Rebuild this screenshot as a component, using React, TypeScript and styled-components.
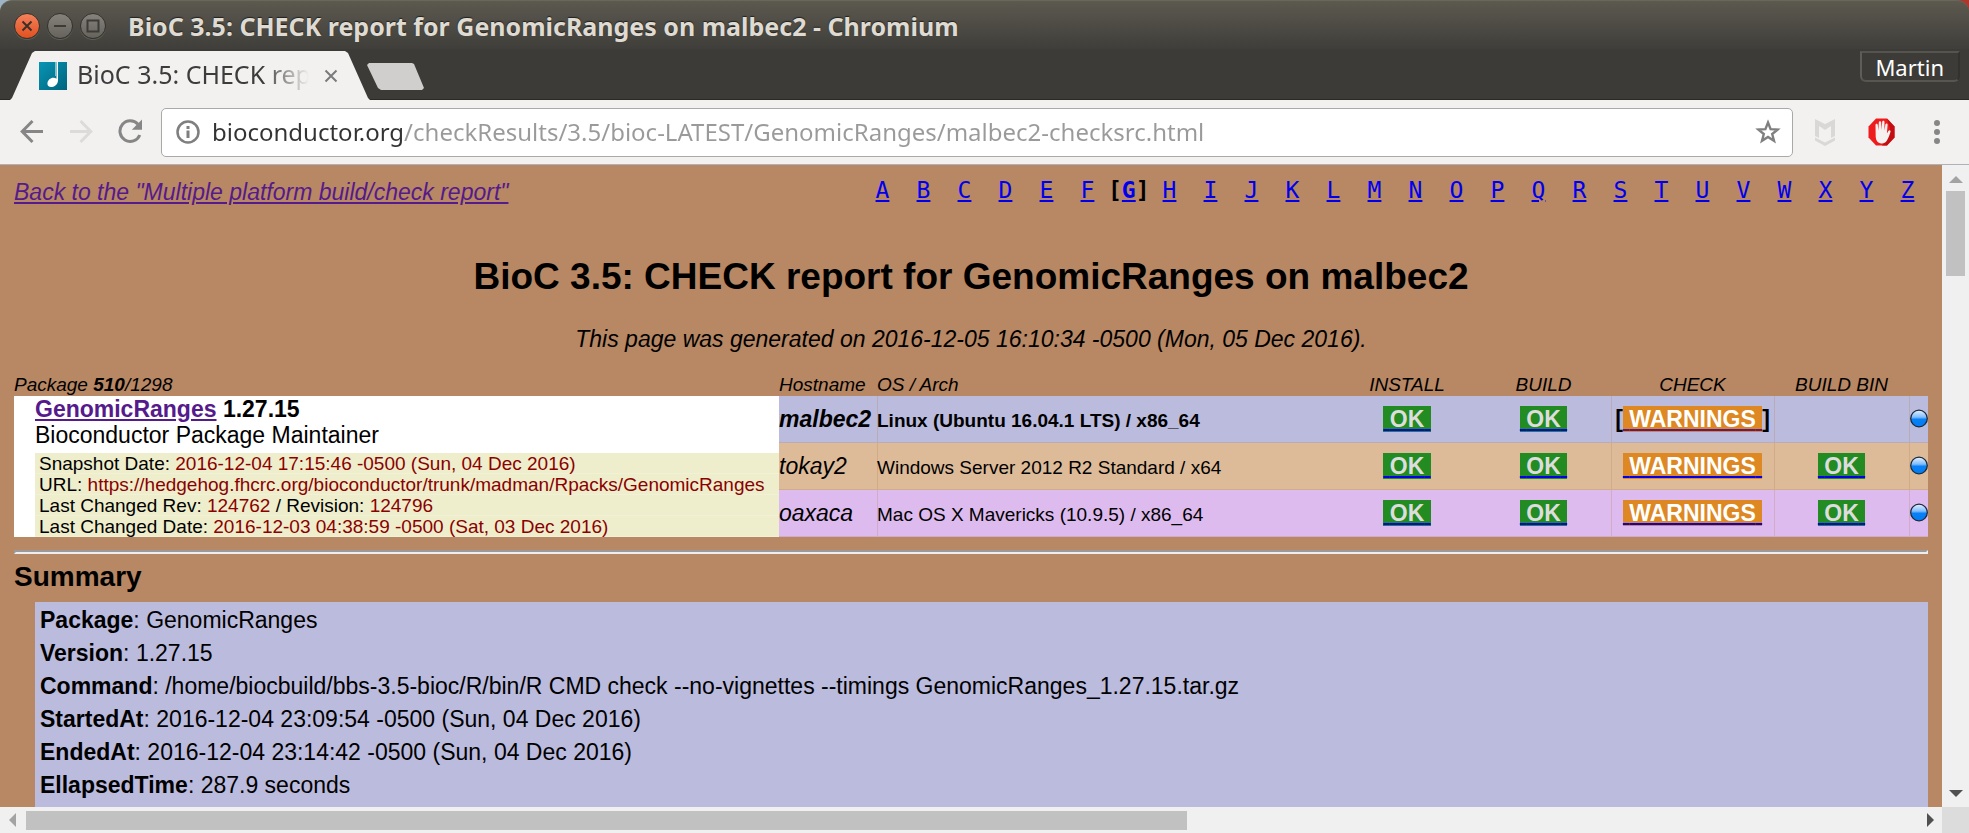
import React from 'react';
import styled, { createGlobalStyle, css } from 'styled-components';

const chromeFont = '"Noto Sans", "Open Sans", sans-serif';
const pageFont = '"Liberation Sans", Arial, sans-serif';
const monoFont = '"DejaVu Sans Mono", monospace';

const linkBlue = '#0000ee';
const linkVisited = '#551a8b';

const GlobalStyle = createGlobalStyle`
  * { box-sizing: border-box; }
  body { margin: 0; background: #3c3b37; }
  button { border: 0; padding: 0; background: none; font: inherit; color: inherit; }
`;

const Window = styled.div`
  display: flex;
  flex-direction: column;
  height: 100vh;
  overflow: hidden;
  background: linear-gradient(to right, #9fb4c4 50%, #b0352a 50%);
`;

/* ---------- title bar ---------- */

const TitleBar = styled.header`
  display: flex;
  align-items: center;
  gap: 7px;
  height: 49px;
  flex: none;
  padding: 1px 14px 0;
  border-top: 1px solid #69665b;
  border-radius: 12px 12px 0 0;
  background: linear-gradient(#5c594f, #3f3e3a);
  box-shadow: 0 12px 0 #3c3b37;
`;

const WindowButton = styled.button<{ $close?: boolean }>`
  width: 26px;
  height: 26px;
  border-radius: 50%;
  border: 1px solid #33322e;
  background: ${(p) =>
    p.$close ? 'linear-gradient(#f3815c, #e2501f)' : 'linear-gradient(#85827b, #65635c)'};
  box-shadow: 0 1px 0 #605e56;

  svg {
    display: block;
  }
`;

const WindowTitle = styled.h1`
  margin: 0 0 0 15px;
  color: #dfdbd2;
  font: bold 25px/34px ${chromeFont};
  text-shadow: 0 -1px 1px #22211e;
  white-space: nowrap;
`;

/* ---------- tab strip ---------- */

const TabStrip = styled.div`
  position: relative;
  display: flex;
  align-items: flex-start;
  height: 51px;
  flex: none;
  padding: 2px 9px 0 10px;
  background: #3c3b37;
  border-bottom: 1px solid #2b2926;
`;

const Tab = styled.div`
  display: flex;
  align-items: center;
  width: 360px;
  height: 49px;
  padding: 0 32px 0 29px;
  background: #f2f1f0;
  clip-path: polygon(0 100%, 2px 47px, 22px 2px, 25px 0, 335px 0, 338px 2px, 358px 47px, 100% 100%);
`;

const TabTitle = styled.span`
  flex: 1;
  margin: 0 15px 3px 10px;
  overflow: hidden;
  color: #3c3c3c;
  font: 25px/34px ${chromeFont};
  white-space: nowrap;
  mask-image: linear-gradient(to right, #000 80%, transparent);
`;

const TabClose = styled.button`
  display: flex;
  width: 14px;
  height: 14px;
`;

const NewTab = styled.button`
  width: 58px;
  height: 27px;
  margin: 12px auto 0 -3px;
  background: #d0cfce;
  clip-path: polygon(0 2px, 2px 0, 45px 0, 47px 1px, 57px 25px, 55px 27px, 14px 27px, 11px 25px);
`;

const ProfileButton = styled.button`
  align-self: flex-start;
  height: 31px;
  padding: 0 14px 0 13px;
  border: 2px solid;
  border-color: #55544f #33322e #57564f #5e5d58;
  border-radius: 0 0 6px 6px;
  color: #fff;
  font: 22px/28px ${chromeFont};
`;

/* ---------- toolbar ---------- */

const Toolbar = styled.nav`
  display: flex;
  align-items: center;
  height: 65px;
  flex: none;
  padding: 0 14px 0 20px;
  background: #f2f1f0;
  border-bottom: 1px solid #b0b0b6;
`;

const NavButtons = styled.div`
  display: flex;
  gap: 25px;
  margin-right: 17px;
`;

const IconButton = styled.button`
  display: flex;
  flex: none;
`;

const Omnibox = styled.form`
  display: flex;
  align-items: center;
  flex: 1;
  height: 49px;
  padding: 0 11px 0 14px;
  gap: 12px;
  border: 1px solid #a9a9a9;
  border-radius: 5px;
  background: #fff;
`;

const AddressInput = styled.input`
  flex: 1;
  min-width: 0;
  height: 38px;
  padding: 0 0 2px;
  border: 0;
  outline: 0;
  color: #9a9a9a;
  font: 24px/36px ${chromeFont};
  background: linear-gradient(to right, #333 192px, #9a9a9a 192px);
  background-clip: text;
  -webkit-text-fill-color: transparent;
`;

const Extensions = styled.div`
  display: flex;
  align-items: center;
  gap: 32px;
  margin-left: 21px;
`;

/* ---------- viewport and scroll bars ---------- */

const Viewport = styled.div`
  display: grid;
  grid-template: minmax(0, 1fr) 26px / minmax(0, 1fr) 27px;
  flex: 1;
  min-height: 0;
  background: #f0f0f0;
`;

const ScrollTrack = styled.div<{ $horizontal?: boolean }>`
  display: flex;
  align-items: center;
  flex-direction: ${(p) => (p.$horizontal ? 'row' : 'column')};
  padding: ${(p) => (p.$horizontal ? '0 8px 0 9px' : '11px 0 10px')};
`;

const ScrollThumb = styled.div<{ $horizontal?: boolean }>`
  background: #c1c1c1;
  ${(p) =>
    p.$horizontal
      ? css`
          width: calc(60% + 6px);
          height: 19px;
          margin: 0 auto 0 10px;
        `
      : css`
          width: 19px;
          height: 85px;
          margin: 8px 0 auto;
        `}
`;

const ScrollCorner = styled.div`
  background: #dcdcdc;
`;

/* ---------- report page ---------- */

const Page = styled.main`
  overflow: hidden;
  padding: 12px 14px 0;
  background: #b88763;
  color: #000;
  font: 23px/26px ${pageFont};
`;

const TopLinks = styled.div`
  display: flex;
  justify-content: space-between;
  align-items: flex-start;
`;

const BackLink = styled.a`
  color: ${linkVisited};
  font-style: italic;
  line-height: 30px;
`;

const LetterIndex = styled.nav`
  display: flex;
  font-family: ${monoFont};
`;

const Letter = styled.span<{ $current?: boolean }>`
  width: 41px;
  text-align: center;
  font-weight: ${(p) => (p.$current ? 'bold' : 'normal')};
`;

const Link = styled.a<{ $visited?: boolean }>`
  color: ${(p) => (p.$visited ? linkVisited : linkBlue)};
`;

const ReportTitle = styled.h2`
  margin: 49px 0 28px;
  font-size: 37px;
  line-height: 42px;
  text-align: center;
`;

const Generated = styled.p`
  margin: 0 0 13px;
  font-style: italic;
  text-align: center;
`;

const ResultTable = styled.table`
  width: 100%;
  table-layout: fixed;
  border-collapse: collapse;

  td,
  th {
    padding: 0;
  }
`;

const Col = styled.col<{ $width?: number }>`
  width: ${(p) => (p.$width ? `${p.$width}px` : 'auto')};
`;

const HeadCell = styled.th<{ $center?: boolean }>`
  height: 31px;
  vertical-align: bottom;
  text-align: ${(p) => (p.$center ? 'center' : 'left')};
  font-size: 19px;
  font-style: italic;
  font-weight: normal;
  line-height: 22px;
  white-space: nowrap;
`;

const ResultRow = styled.tr<{ $color: string; $current?: boolean }>`
  height: 47px;
  background: ${(p) => p.$color};
  font-weight: ${(p) => (p.$current ? 'bold' : 'normal')};
  line-height: 47px;
  white-space: nowrap;
`;

const Cell = styled.td<{ $center?: boolean; $seam?: boolean }>`
  height: 47px;
  vertical-align: top;
  text-align: ${(p) => (p.$center ? 'center' : 'left')};
  box-shadow: inset ${(p) => (p.$seam ? '1px' : '0')} -1px 0 rgba(184, 135, 99, 0.3);
`;

const Small = styled.span`
  font-size: 19px;
  line-height: 22px;
`;

const PackageCell = styled.td`
  vertical-align: top;
  background: #fff;
  font-weight: normal;
  line-height: 26px;
`;

const PackageInfo = styled.div`
  padding-left: 21px;
`;

const SvnInfo = styled.ul`
  margin: 5px 0 0;
  padding: 0;
  list-style: none;
  background: #eeeecc;
  font-size: 19px;
  line-height: 21px;

  li {
    padding-left: 4px;
    box-shadow: inset 0 -1px 0 #f1f1d6;
  }
`;

const SvnValue = styled.span`
  color: #8b0000;
`;

const StatusBadge = styled.span<{ $warning?: boolean }>`
  background: ${(p) => (p.$warning ? '#dd8822' : '#228b22')};
  color: ${(p) => (p.$warning ? '#fff' : '#ddd')};
  font-weight: bold;
`;

const DotCell = styled(Cell)`
  svg {
    display: block;
    margin: 13px 0 0 1px;
  }
`;

const Rule = styled.hr`
  height: 4px;
  margin: 13px 0 7px;
  border: 2px solid;
  border-color: #9a9a9a #eee #eee #9a9a9a;
`;

const SectionTitle = styled.h3`
  margin: 0 0 9px;
  font-size: 28px;
  line-height: 32px;
`;

const SummaryBox = styled.ul`
  margin: 0 0 0 21px;
  padding: 2px 5px 40px;
  list-style: none;
  background: #bbbbdd;
  line-height: 33px;
  white-space: nowrap;
`;

/* ---------- drawings ---------- */

const Favicon = () => (
  <svg width="28" height="28" viewBox="0 0 28 28" aria-hidden="true">
    <defs>
      <linearGradient id="fav" x1="0" y1="0" x2="1" y2="1">
        <stop offset="0" stopColor="#0795b5" />
        <stop offset="1" stopColor="#01647d" />
      </linearGradient>
    </defs>
    <rect width="28" height="28" fill="url(#fav)" />
    <path d="M16 0h1v14h-1z" fill="#7cc0d0" />
    <path d="M17.500 0H19v18c0 4-2.500 6.500-6 7-3 .3-4.800-1.200-4.600-3.700.3-3.200 3-5.600 6-5.600 1.300 0 2.300.3 3.100 1z" fill="#fff" />
  </svg>
);

const Triangle = ({ d, color }: { d: string; color: string }) => (
  <svg width={d.includes('V') ? 7 : 14} height={d.includes('V') ? 14 : 7} aria-hidden="true">
    <path d={d} fill={color} />
  </svg>
);

const BlueDot = () => (
  <svg width="18" height="20" viewBox="0 0 18 20" role="img" aria-label="details">
    <defs>
      <linearGradient id="dot" x1="0" y1="0" x2="0" y2="1">
        <stop offset="0" stopColor="#e8f3ff" />
        <stop offset=".42" stopColor="#7fbcff" />
        <stop offset=".55" stopColor="#0a80f5" />
        <stop offset="1" stopColor="#007df5" />
      </linearGradient>
    </defs>
    <circle cx="9" cy="9.500" r="8.300" fill="url(#dot)" stroke="#1c2a3a" strokeWidth="1.300" />
  </svg>
);

/* ---------- data ---------- */

const letters = 'ABCDEFGHIJKLMNOPQRSTUVWXYZ'.split('');

const hosts = [
  { name: 'malbec2', os: 'Linux (Ubuntu 16.04.1 LTS) / x86_64', color: '#bbbbdd', bin: false },
  { name: 'tokay2', os: 'Windows Server 2012 R2 Standard / x64', color: '#ddbb99', bin: true },
  { name: 'oaxaca', os: 'Mac OS X Mavericks (10.9.5) / x86_64', color: '#ddbbee', bin: true },
];

const summary = [
  ['Package', 'GenomicRanges'],
  ['Version', '1.27.15'],
  ['Command', '/home/biocbuild/bbs-3.5-bioc/R/bin/R CMD check --no-vignettes --timings GenomicRanges_1.27.15.tar.gz'],
  ['StartedAt', '2016-12-04 23:09:54 -0500 (Sun, 04 Dec 2016)'],
  ['EndedAt', '2016-12-04 23:14:42 -0500 (Sun, 04 Dec 2016)'],
  ['EllapsedTime', '287.9 seconds'],
];

const Status = ({ label, visited }: { label: string; visited?: boolean }) => (
  <Link href="#" $visited={visited}>
    <StatusBadge $warning={label === 'WARNINGS'}>&nbsp;{label}&nbsp;</StatusBadge>
  </Link>
);

const PackageSummary = () => (
  <PackageCell rowSpan={3}>
    <PackageInfo>
      <b>
        <Link href="#" $visited>GenomicRanges</Link> 1.27.15
      </b>
      <br />
      Bioconductor Package Maintainer
      <SvnInfo>
        <li>Snapshot Date: <SvnValue>2016-12-04 17:15:46 -0500 (Sun, 04 Dec 2016)</SvnValue></li>
        <li>URL: <SvnValue>https://hedgehog.fhcrc.org/bioconductor/trunk/madman/Rpacks/GenomicRanges</SvnValue></li>
        <li>Last Changed Rev: <SvnValue>124762</SvnValue> / Revision: <SvnValue>124796</SvnValue></li>
        <li>Last Changed Date: <SvnValue>2016-12-03 04:38:59 -0500 (Sat, 03 Dec 2016)</SvnValue></li>
      </SvnInfo>
    </PackageInfo>
  </PackageCell>
);

const Browser = () => (
  <>
    <TitleBar>
      <WindowButton $close aria-label="Close window">
        <svg width="24" height="24" viewBox="0 0 24 24">
          <path d="M7.500 7.500l9 9m0-9l-9 9" stroke="#3b3029" strokeWidth="2" />
        </svg>
      </WindowButton>
      <WindowButton aria-label="Minimize window">
        <svg width="24" height="24" viewBox="0 0 24 24">
          <path d="M6 12h12" stroke="#3c3b37" strokeWidth="2" />
        </svg>
      </WindowButton>
      <WindowButton aria-label="Maximize window">
        <svg width="24" height="24" viewBox="0 0 24 24">
          <path d="M6.500 6.500h11v11h-11z" fill="none" stroke="#3c3b37" strokeWidth="2" />
        </svg>
      </WindowButton>
      <WindowTitle>BioC 3.5: CHECK report for GenomicRanges on malbec2 - Chromium</WindowTitle>
    </TitleBar>
    <TabStrip>
      <Tab>
        <Favicon />
        <TabTitle>BioC 3.5: CHECK report</TabTitle>
        <TabClose aria-label="Close tab">
          <svg width="14" height="14" viewBox="0 0 14 14">
            <path d="M1.500 1.500l11 11m0-11l-11 11" stroke="#7b7b7b" strokeWidth="2" />
          </svg>
        </TabClose>
      </Tab>
      <NewTab aria-label="New tab" />
      <ProfileButton>Martin</ProfileButton>
    </TabStrip>
    <Toolbar>
      <NavButtons>
        <IconButton aria-label="Back">
          <svg width="24" height="26" viewBox="0 0 24 26" fill="none" stroke="#868686" strokeWidth="3">
            <path d="M23 12.500H3M12.500 2L2.200 12.500l10.300 10.500" />
          </svg>
        </IconButton>
        <IconButton aria-label="Forward">
          <svg width="24" height="26" viewBox="0 0 24 26" fill="none" stroke="#dcdbda" strokeWidth="3">
            <path d="M1 12.500h20M11.500 2l10.300 10.500L11.500 23" />
          </svg>
        </IconButton>
        <IconButton aria-label="Reload">
          <svg width="26" height="26" viewBox="0 0 26 26">
            <path d="M20 5.300A10.300 10.300 0 1 0 21.800 16" fill="none" stroke="#868686" strokeWidth="3" />
            <path d="M24 .500v10.200H13.800z" fill="#868686" />
          </svg>
        </IconButton>
      </NavButtons>
      <Omnibox>
        <IconButton type="button" aria-label="Site information">
          <svg width="24" height="24" viewBox="0 0 24 24">
            <circle cx="12" cy="12" r="10.500" fill="none" stroke="#7f7f7f" strokeWidth="2.500" />
            <path d="M10.500 6h3v3h-3zM10.500 10.500h3V18h-3z" fill="#7f7f7f" />
          </svg>
        </IconButton>
        <AddressInput
          aria-label="Address"
          defaultValue="bioconductor.org/checkResults/3.5/bioc-LATEST/GenomicRanges/malbec2-checksrc.html"
        />
        <IconButton type="button" aria-label="Bookmark this page">
          <svg width="26" height="26" viewBox="0 0 26 26">
            <path
              d="M13 3.500l2.600 6.700 7 .4-5.400 4.400 1.800 6.800-6-3.800-6 3.800 1.800-6.800-5.400-4.400 7-.4z"
              fill="none"
              stroke="#7f7f7f"
              strokeWidth="2.400"
            />
          </svg>
        </IconButton>
      </Omnibox>
      <Extensions>
        <IconButton aria-label="Web advisor">
          <svg width="22" height="28" viewBox="0 0 22 28" fill="#d9d8d7">
            <path d="M1 1l10 5 10-5v17l-4 2V8l-6 4-6-4v12l-4-2z" />
            <path d="M1 19.500l10 5 10-5v3L11 28 1 22.500z" />
          </svg>
        </IconButton>
        <IconButton aria-label="Ad blocker">
          <svg width="27" height="28" viewBox="0 0 27 28">
            <path d="M8 .500h11l7.500 8v11l-7.500 8H8l-7.500-8v-11z" fill="#ee1c1c" />
            <path d="M19 .500l7.500 8v11l-7.500 8h-5l6-8 2-9z" fill="#c40d10" />
            <path
              d="M7.500 7c0-1.600 2.200-1.600 2.300 0l.5 5.500.5-8c.1-1.700 2.300-1.700 2.400 0l.3 7.500.7-8c.2-1.600 2.300-1.500 2.300.2l-.1 8.300 1-6c.3-1.500 2.300-1.200 2.200.4l-.7 8.600 1.500-2.500c.9-1.300 2.500-.6 2.100.7-.8 3-1.900 6.200-3.700 9-1.500 2.300-3.500 3-5.800 2.700-3.300-.4-5-2.800-5.300-6.500z"
              fill="#f4f1f0"
            />
          </svg>
        </IconButton>
        <IconButton aria-label="Menu">
          <svg width="28" height="26" viewBox="0 0 28 26" fill="#868686">
            <circle cx="10" cy="4" r="3" />
            <circle cx="10" cy="13" r="3" />
            <circle cx="10" cy="22" r="3" />
          </svg>
        </IconButton>
      </Extensions>
    </Toolbar>
  </>
);

export default function App() {
  return (
    <Window>
      <GlobalStyle />
      <Browser />
      <Viewport>
        <Page>
          <TopLinks>
            <BackLink href="#">Back to the "Multiple platform build/check report"</BackLink>
            <LetterIndex>
              {letters.map((l) => (
                <Letter key={l} $current={l === 'G'}>
                  {l === 'G' && '['}
                  <Link href="#">{l}</Link>
                  {l === 'G' && ']'}
                </Letter>
              ))}
            </LetterIndex>
          </TopLinks>

          <ReportTitle>BioC 3.5: CHECK report for GenomicRanges on malbec2</ReportTitle>
          <Generated>This page was generated on 2016-12-05 16:10:34 -0500 (Mon, 05 Dec 2016).</Generated>

          <ResultTable>
            <colgroup>
              <Col $width={765} />
              <Col $width={98} />
              <Col />
              <Col $width={138} />
              <Col $width={135} />
              <Col $width={163} />
              <Col $width={135} />
              <Col $width={19} />
            </colgroup>
            <thead>
              <tr>
                <HeadCell>Package <b>510</b>/1298</HeadCell>
                <HeadCell>Hostname</HeadCell>
                <HeadCell>OS / Arch</HeadCell>
                <HeadCell $center>INSTALL</HeadCell>
                <HeadCell $center>BUILD</HeadCell>
                <HeadCell $center>CHECK</HeadCell>
                <HeadCell $center>BUILD BIN</HeadCell>
                <HeadCell />
              </tr>
            </thead>
            <tbody>
              {hosts.map((h, i) => (
                <ResultRow key={h.name} $color={h.color} $current={i === 0}>
                  {i === 0 && <PackageSummary />}
                  <Cell><i>{h.name}</i></Cell>
                  <Cell $seam><Small>{h.os}</Small></Cell>
                  <Cell $center><Status label="OK" /></Cell>
                  <Cell $center><Status label="OK" /></Cell>
                  <Cell $center $seam>
                    {i === 0 && '['}
                    <Status label="WARNINGS" visited={i === 0} />
                    {i === 0 && ']'}
                  </Cell>
                  <Cell $center $seam>{h.bin && <Status label="OK" />}</Cell>
                  <DotCell $seam><BlueDot /></DotCell>
                </ResultRow>
              ))}
            </tbody>
          </ResultTable>

          <Rule />
          <SectionTitle>Summary</SectionTitle>
          <SummaryBox>
            {summary.map(([key, value]) => (
              <li key={key}><b>{key}</b>: {value}</li>
            ))}
          </SummaryBox>
        </Page>
        <ScrollTrack>
          <IconButton aria-label="Scroll up"><Triangle d="M0 7h14L7 0z" color="#a3a3a3" /></IconButton>
          <ScrollThumb />
          <IconButton aria-label="Scroll down"><Triangle d="M0 0h14L7 7z" color="#505050" /></IconButton>
        </ScrollTrack>
        <ScrollTrack $horizontal>
          <IconButton aria-label="Scroll left"><Triangle d="M7 0V14L0 7z" color="#a3a3a3" /></IconButton>
          <ScrollThumb $horizontal />
          <IconButton aria-label="Scroll right"><Triangle d="M0 0V14L7 7z" color="#505050" /></IconButton>
        </ScrollTrack>
        <ScrollCorner />
      </Viewport>
    </Window>
  );
}
